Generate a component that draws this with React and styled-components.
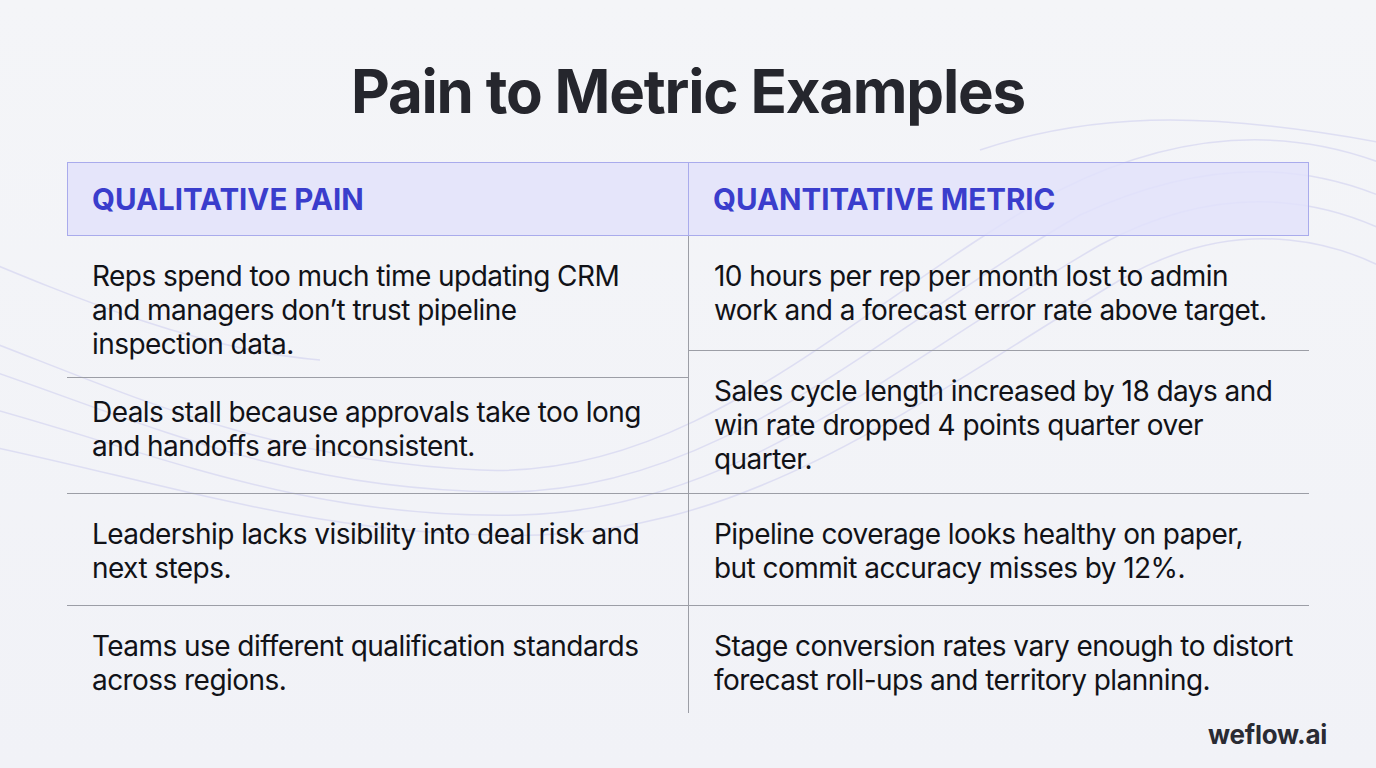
import React from "react";
import styled, { createGlobalStyle } from "styled-components";

const GlobalStyle = createGlobalStyle`
  html, body {
    margin: 0;
    padding: 0;
    background: #f3f4f8;
  }
  * {
    box-sizing: border-box;
  }
`;

const Page = styled.div`
  position: relative;
  width: 1376px;
  height: 768px;
  overflow: hidden;
  background: linear-gradient(180deg, #f4f5f8 0%, #f1f2f7 100%);
  font-family: Inter, "Noto Sans", sans-serif;
`;

const Waves = styled.svg`
  position: absolute;
  inset: 0;
  pointer-events: none;
`;

const Content = styled.div`
  position: relative;
  width: 100%;
  display: flex;
  flex-direction: column;
  align-items: center;
`;

const Title = styled.h1`
  margin: 56px 0 0;
  font-size: 60px;
  line-height: 70px;
  font-weight: 700;
  letter-spacing: -0.02em;
  color: #25262d;
`;

const Table = styled.div`
  width: 1242px;
  margin-top: 36px;
`;

const HeaderRow = styled.div`
  display: grid;
  grid-template-columns: 1fr 1fr;
  height: 74px;
  background: rgba(226, 226, 250, 0.85);
  border: 1px solid #a9abec;
`;

const HeaderCell = styled.div`
  display: flex;
  align-items: center;
  padding: 0 24px;
  font-size: 29.5px;
  font-weight: 700;
  color: #3a3dcc;
  border-left: ${(p) => (p.$divider ? "1px solid #a9abec" : "none")};
`;

const Body = styled.div`
  display: grid;
  grid-template-columns: 1fr 1fr;
`;

const Stack = styled.div`
  display: flex;
  flex-direction: column;
  border-left: ${(p) => (p.$divider ? "1px solid #9c9ea6" : "none")};
  border-bottom: 1.5px solid #9c9ea6;
`;

const Cell = styled.div`
  height: ${(p) => p.$h}px;
  padding: ${(p) => p.$pt ?? 23}px 0 0 25px;
  font-size: 28px;
  line-height: 34px;
  color: #111217;
  letter-spacing: -0.02em;
  white-space: pre-line;
  border-left: ${(p) => (p.$divider ? "1px solid #9c9ea6" : "none")};
  border-bottom: ${(p) => (p.$line ? "1.5px solid #9c9ea6" : "none")};
`;

const Brand = styled.div`
  position: absolute;
  right: 49px;
  bottom: 18px;
  font-size: 26px;
  font-weight: 700;
  color: #2a2b33;
  letter-spacing: -0.01em;
`;

const rows = [
  [
    "Leadership lacks visibility into deal risk and\nnext steps.",
    "Pipeline coverage looks healthy on paper,\nbut commit accuracy misses by 12%.",
    112,
  ],
  [
    "Teams use different qualification standards\nacross regions.",
    "Stage conversion rates vary enough to distort\nforecast roll-ups and territory planning.",
    107,
  ],
];

export default function App() {
  return (
    <>
      <GlobalStyle />
      <Page>
        <Waves width="1376" height="768" viewBox="0 0 1376 768">
          <g fill="none" stroke="#cacaef" strokeWidth="1.5" opacity="0.5">
            <path d="M-40 330 C 120 390, 260 460, 480 470 C 700 480, 860 300, 1060 190 C 1200 120, 1320 130, 1420 180" />
            <path d="M-40 360 C 140 420, 280 490, 500 492 C 720 494, 880 330, 1080 215 C 1220 150, 1330 165, 1420 215" />
            <path d="M-40 400 C 150 450, 300 520, 520 515 C 740 510, 900 360, 1100 245 C 1230 175, 1340 200, 1420 250" />
            <path d="M-40 440 C 160 480, 320 540, 540 535 C 760 528, 920 400, 1120 280 C 1240 210, 1350 240, 1420 290" />
            <path d="M-40 250 C 80 300, 200 350, 320 360" />
            <path d="M980 150 C 1100 110, 1220 110, 1420 150" />
          </g>
        </Waves>
        <Content>
          <Title>Pain to Metric Examples</Title>
          <Table>
            <HeaderRow>
              <HeaderCell>QUALITATIVE PAIN</HeaderCell>
              <HeaderCell $divider>QUANTITATIVE METRIC</HeaderCell>
            </HeaderRow>
            <Body>
              <Stack>
                <Cell $h={142} $line>
                  {"Reps spend too much time updating CRM\nand managers don’t trust pipeline\ninspection data."}
                </Cell>
                <Cell $h={115} $pt={17}>
                  {"Deals stall because approvals take too long\nand handoffs are inconsistent."}
                </Cell>
              </Stack>
              <Stack $divider>
                <Cell $h={115} $line>
                  {"10 hours per rep per month lost to admin\nwork and a forecast error rate above target."}
                </Cell>
                <Cell $h={142}>
                  {"Sales cycle length increased by 18 days and\nwin rate dropped 4 points quarter over\nquarter."}
                </Cell>
              </Stack>
              {rows.map(([pain, metric, h], i) => (
                <React.Fragment key={i}>
                  <Cell $h={h} $line={i === 0}>
                    {pain}
                  </Cell>
                  <Cell $h={h} $line={i === 0} $divider>
                    {metric}
                  </Cell>
                </React.Fragment>
              ))}
            </Body>
          </Table>
        </Content>
        <Brand>weflow.ai</Brand>
      </Page>
    </>
  );
}
